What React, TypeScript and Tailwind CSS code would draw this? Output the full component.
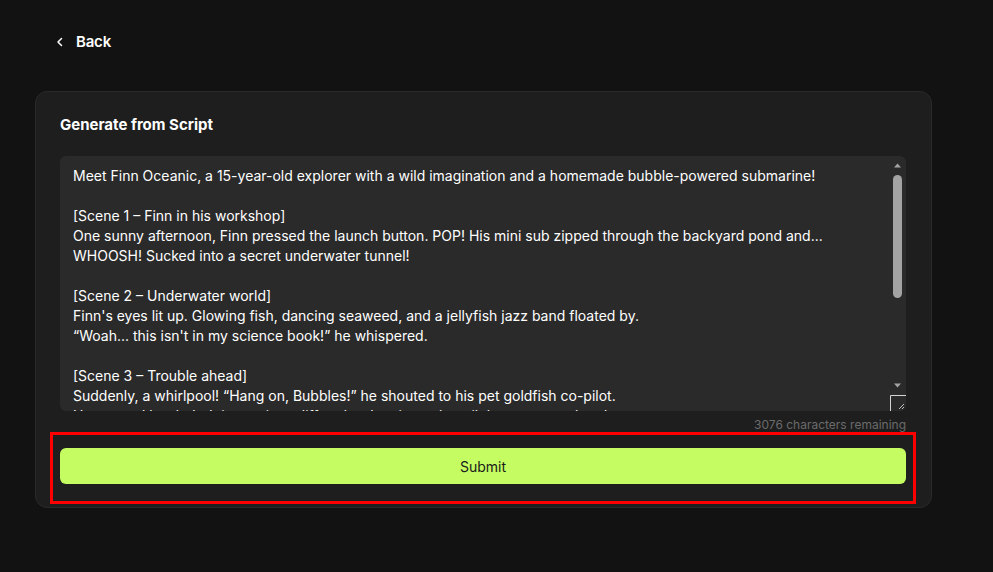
import React from "react";

const TEXT = `Meet Finn Oceanic, a 15-year-old explorer with a wild imagination and a homemade bubble-powered submarine!

[Scene 1 – Finn in his workshop]
One sunny afternoon, Finn pressed the launch button. POP! His mini sub zipped through the backyard pond and...
WHOOSH! Sucked into a secret underwater tunnel!

[Scene 2 – Underwater world]
Finn's eyes lit up. Glowing fish, dancing seaweed, and a jellyfish jazz band floated by.
“Woah... this isn't in my science book!” he whispered.

[Scene 3 – Trouble ahead]
Suddenly, a whirlpool! “Hang on, Bubbles!” he shouted to his pet goldfish co-pilot.
He steered hard, dodging a giant cliff and a sleeping eel, until the current calmed.

[Scene 4 – The treasure]
Behind a curtain of kelp, Finn spotted a glowing chest covered in barnacles.
Inside? A map to the lost city of Coralia!`;

export default function App() {
  return (
    <div
      className="min-h-[572px] w-full bg-[#121212] text-white"
      style={{ fontFamily: "Inter, 'Noto Sans', sans-serif" }}
    >
      <div className="px-[35px] pt-[30px]">
        <button className="flex h-[22px] items-center gap-[11px] pl-[20px] text-[15px] font-semibold leading-[22px] tracking-[-0.2px] text-white">
          <svg width="10" height="10" viewBox="0 0 10 10" fill="none" className="mt-[1px]">
            <path d="M6.5 1.5 3 5l3.5 3.5" stroke="white" strokeWidth="1.5" strokeLinecap="round" strokeLinejoin="round" />
          </svg>
          <span className="mt-[1px]">Back</span>
        </button>

        <div className="relative mt-[39px] w-[897px] rounded-[12px] border border-[#2a2a2a] bg-[#1e1e1e] px-[24px] pb-[23px] pt-[22px]">
          <h2 className="text-[15px] font-bold leading-[22px] text-white">Generate from Script</h2>
          <div className="relative mt-[20px] flex h-[255px] w-[846px] overflow-hidden rounded-[6px] bg-[#2a2a2a]">
            <div className="flex-1 whitespace-pre-wrap pl-[13px] pr-[4px] pt-[10px] text-[14px] leading-[20px] text-white">
              {TEXT}
            </div>
            <div className="relative w-[16px] shrink-0">
              <svg width="16" height="255" viewBox="0 0 16 255" className="absolute left-0 top-0">
                <path d="M4 11.5 7.5 7.5 11 11.5Z" fill="#a3a3a3" />
                <rect x="3" y="19" width="9" height="123" rx="4.5" fill="#a3a3a3" />
                <path d="M4 227.5 7.5 231.5 11 227.5Z" fill="#a3a3a3" />
              </svg>
            </div>
            <svg width="16" height="16" viewBox="0 0 16 16" className="absolute bottom-0 right-0">
              <rect x="0" y="0" width="16" height="16" fill="#2a2a2a" />
              <path d="M0.5 16V0.5H16" stroke="#d4d4d4" strokeWidth="1" fill="none" />
              <path d="M14 9 9 14M14 12 12 14" stroke="#bdbdbd" strokeWidth="1" />
            </svg>
          </div>
          <div className="mt-[6px] pr-[1px] text-right text-[12px] leading-[16px] text-[#6b6b6b]">3076 characters remaining</div>
          <div className="relative mt-[15px]">
            <button className="flex h-[36px] w-[846px] items-center justify-center rounded-[6px] bg-[#c4fc62] text-[14px] text-[#1a1a1a]">
              Submit
            </button>
            <div className="pointer-events-none absolute -left-[10px] -right-[9px] -top-[16px] -bottom-[20px] border-[3px] border-[#ff0000]" />
          </div>
        </div>
      </div>
    </div>
  );
}
